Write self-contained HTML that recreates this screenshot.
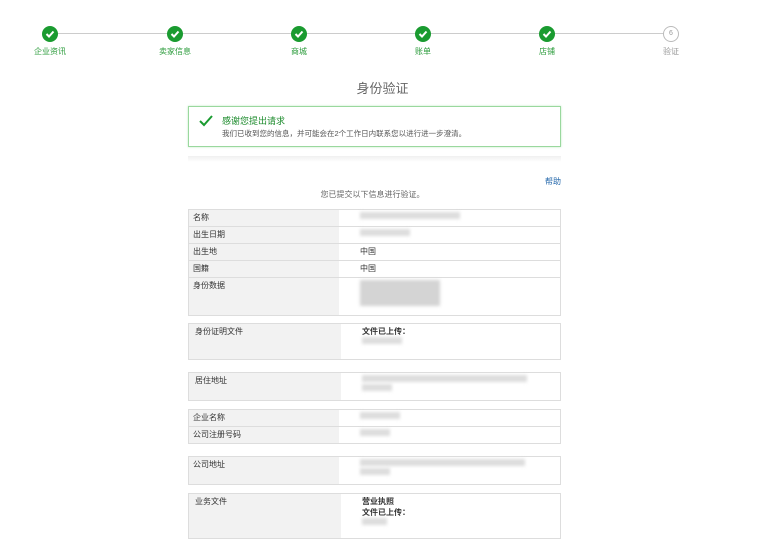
<!DOCTYPE html>
<html><head><meta charset="utf-8"><style>
body{margin:0;width:765px;height:554px;background:#fff;font-family:"Liberation Sans","Noto Sans CJK SC",sans-serif;position:relative;overflow:hidden;font-size:8px;color:#333}
.a{position:absolute}
.line{position:absolute;top:33px;left:50px;width:621px;height:1px;background:#ccc}
.c{position:absolute;top:26px;width:16px;height:16px;border-radius:50%;background:#1a9b30;margin-left:-8px}
.c svg{position:absolute;left:3px;top:3px}
.l{position:absolute;top:46px;font-size:8px;color:#2a9b3a;transform:translateX(-50%)}
table{position:absolute;left:188px;width:373px;border-collapse:collapse;border:1px solid #ddd}
td{border-top:1px solid #ddd;padding:2px 4px;vertical-align:top;font-size:8px;height:12px}
td:first-child{background:#f2f2f2;width:142px}
td+td{padding-left:21px}
.b{display:inline-block;height:7px;background:#ddd;filter:blur(1.5px)}
</style></head><body>
<div class="line"></div>
<div class="c" style="left:50px"><svg width="10" height="10"><path d="M1.5 5l2.5 2.5 4.5-5" stroke="#fff" stroke-width="2" fill="none"/></svg></div>
<div class="c" style="left:175px"><svg width="10" height="10"><path d="M1.5 5l2.5 2.5 4.5-5" stroke="#fff" stroke-width="2" fill="none"/></svg></div>
<div class="c" style="left:299px"><svg width="10" height="10"><path d="M1.5 5l2.5 2.5 4.5-5" stroke="#fff" stroke-width="2" fill="none"/></svg></div>
<div class="c" style="left:423px"><svg width="10" height="10"><path d="M1.5 5l2.5 2.5 4.5-5" stroke="#fff" stroke-width="2" fill="none"/></svg></div>
<div class="c" style="left:547px"><svg width="10" height="10"><path d="M1.5 5l2.5 2.5 4.5-5" stroke="#fff" stroke-width="2" fill="none"/></svg></div>
<div class="c" style="left:671px;background:#fff;border:1px solid #bbb;width:14px;height:14px;font-size:7px;color:#999;text-align:center;line-height:14px">6</div>
<div class="l" style="left:50px">企业资讯</div><div class="l" style="left:175px">卖家信息</div><div class="l" style="left:299px">商城</div><div class="l" style="left:423px">账单</div><div class="l" style="left:547px">店铺</div><div class="l" style="left:671px;color:#999">验证</div>
<div class="a" style="left:0;width:765px;top:78px;text-align:center;font-size:13px;color:#666">身份验证</div>
<div class="a" style="left:188px;top:106px;width:371px;height:39px;border:1px solid #9ad89e;box-shadow:0 0 2px #bfe8c2">
<svg class="a" style="left:10px;top:8px" width="14" height="12"><path d="M1 6l4 4 8-9" stroke="#1a9b30" stroke-width="2" fill="none"/></svg>
<div class="a" style="left:33px;top:7px;font-size:9px;color:#1a8a2a">感谢您提出请求</div>
<div class="a" style="left:33px;top:21px;font-size:7.5px;color:#555">我们已收到您的信息，并可能会在2个工作日内联系您以进行进一步澄清。</div></div>
<div class="a" style="left:188px;top:156px;width:373px;height:6px;background:linear-gradient(#f0f0f0,#fff)"></div>
<div class="a" style="left:545px;top:176px;font-size:8px;color:#2266aa">帮助</div>
<div class="a" style="left:0;width:745px;top:189px;text-align:center;font-size:8px;color:#666">您已提交以下信息进行验证。</div>
<table style="top:209px"><tr><td>名称</td><td><span class="b" style="width:100px"></span></td></tr><tr><td>出生日期</td><td><span class="b" style="width:50px"></span></td></tr><tr><td>出生地</td><td>中国</td></tr><tr><td>国籍</td><td>中国</td></tr><tr><td style="height:33px">身份数据</td><td><span class="b" style="width:80px;height:26px;background:#d4d4d4"></span></td></tr></table>
<table style="top:323px"><tr><td style="height:31px;padding-left:6px">身份证明文件</td><td style="font-weight:bold">文件已上传：<br><span class="b" style="width:40px"></span></td></tr></table>
<table style="top:372px"><tr><td style="height:23px;padding-left:6px">居住地址</td><td><span class="b" style="width:165px"></span><br><span class="b" style="width:30px"></span></td></tr></table>
<table style="top:409px"><tr><td>企业名称</td><td><span class="b" style="width:40px"></span></td></tr><tr><td>公司注册号码</td><td><span class="b" style="width:30px"></span></td></tr></table>
<table style="top:456px"><tr><td style="height:23px">公司地址</td><td><span class="b" style="width:165px"></span><br><span class="b" style="width:30px"></span></td></tr></table>
<table style="top:493px"><tr><td style="height:40px;padding-left:6px">业务文件</td><td style="font-weight:bold">营业执照<br>文件已上传：<br><span class="b" style="width:25px"></span></td></tr></table>
</body></html>
